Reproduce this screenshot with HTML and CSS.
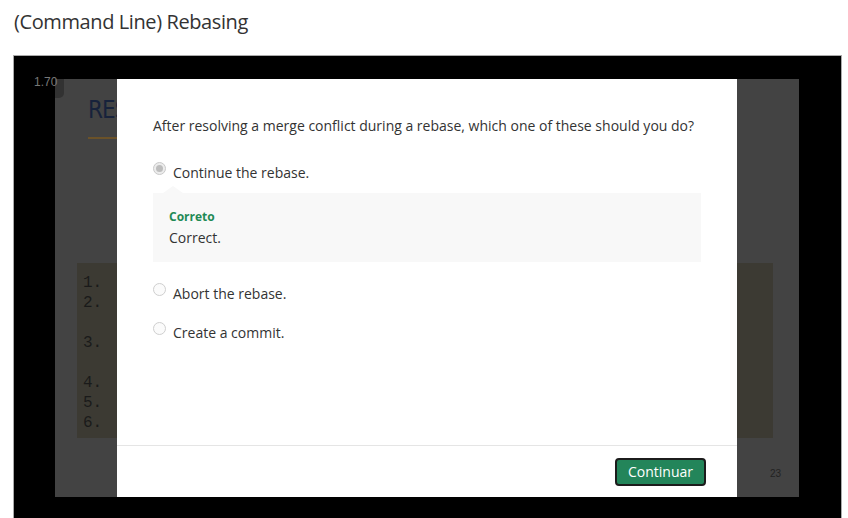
FILE: index.html
```html
<!DOCTYPE html>
<html>
<head>
<meta charset="utf-8">
<link rel="stylesheet" href="styles.css">
</head>
<body>
<h1 class="page-title">(Command Line) Rebasing</h1>
<div class="player">
  <div class="stage">
    <div class="slide">
      <div class="slide-title">RES</div>
      <div class="slide-rule"></div>
      <div class="code">
        <div class="ln">1.</div>
        <div class="ln">2.</div>
        <div class="ln"></div>
        <div class="ln">3.</div>
        <div class="ln"></div>
        <div class="ln">4.</div>
        <div class="ln">5.</div>
        <div class="ln">6.</div>
      </div>
      <div class="slide-foot"><span class="page-no">23</span></div>
    </div>
  </div>
  <div class="speed">1.70</div>
  <div class="modal">
    <div class="modal-body">
      <p class="question">After resolving a merge conflict during a rebase, which one of these should you do?</p>
      <div class="option">
        <span class="radio checked"></span>
        <span class="opt-text">Continue the rebase.</span>
      </div>
      <div class="feedback">
        <div class="fb-title">Correto</div>
        <div class="fb-text">Correct.</div>
      </div>
      <div class="option">
        <span class="radio"></span>
        <span class="opt-text">Abort the rebase.</span>
      </div>
      <div class="option">
        <span class="radio"></span>
        <span class="opt-text">Create a commit.</span>
      </div>
    </div>
    <div class="modal-foot">
      <button class="btn">Continuar</button>
    </div>
  </div>
</div>
</body>
</html>
```

FILE: styles.css
```css
html, body {
  margin: 0;
  padding: 0;
  background: #fff;
  overflow: hidden;
}
body {
  width: 848px;
  height: 518px;
  padding-left: 13px;
  box-sizing: border-box;
  font-family: "Open Sans", "Liberation Sans", sans-serif;
  color: #333;
}
.page-title {
  margin: 8px 0 19px 1px;
  font-size: 20px;
  line-height: 28px;
  font-weight: 400;
  letter-spacing: -0.4px;
  color: #333;
}
.player {
  position: relative;
  width: 829px;
  height: 480px;
  box-sizing: border-box;
  border: 1px solid #aaa;
  border-bottom: none;
  background: #000;
}
.stage {
  padding: 23px 0 0 41px;
}
.slide {
  width: 744px;
  height: 418px;
  background: #434343;
  display: flex;
  flex-direction: column;
  overflow: hidden;
  font-family: "Liberation Sans", Arial, sans-serif;
}
.slide-title {
  margin: 17px 0 0 33px;
  font-family: "Liberation Sans Narrow", "DejaVu Sans Condensed", "Liberation Sans", sans-serif;
  font-size: 24px;
  line-height: 28px;
  letter-spacing: -1px;
  color: #17223b;
  white-space: nowrap;
}
.slide-rule {
  margin: 13px 0 0 33px;
  width: 40px;
  height: 2px;
  background: #6b5229;
}
.code {
  margin: 124px 26px 0 22px;
  padding: 10px 6px 5px;
  background: #3c3a33;
  height: 175px;
  box-sizing: border-box;
}
.ln {
  height: 20px;
  line-height: 21px;
  font-family: "Liberation Mono", "Courier New", monospace;
  font-size: 16px;
  color: #1a1a1a;
}
.slide-foot {
  margin-top: auto;
  display: flex;
  justify-content: flex-end;
  padding: 0 18px 17px 0;
}
.page-no {
  font-size: 10px;
  line-height: 12px;
  color: #222;
}
.speed {
  position: absolute;
  left: 14px;
  top: 12px;
  width: 36px;
  height: 30px;
  box-sizing: border-box;
  padding: 7px 0 0 6px;
  border-radius: 0 0 5px 0;
  background: rgba(0, 0, 0, 0.25);
  font-family: "Liberation Sans", Arial, sans-serif;
  font-size: 12px;
  line-height: 14px;
  color: #777;
}
.modal {
  position: absolute;
  left: 103px;
  top: 23px;
  width: 620px;
  height: 418px;
  background: #fff;
  display: flex;
  flex-direction: column;
}
.modal-body {
  flex: 1;
  padding: 37px 36px 0;
}
.question {
  margin: 0 0 26px;
  font-size: 14px;
  line-height: 20px;
  color: #333;
}
.option {
  display: flex;
  align-items: flex-start;
  gap: 7px;
  font-size: 14px;
  line-height: 20px;
  color: #333;
}
.opt-text {
  padding-top: 1px;
}
.option + .option {
  margin-top: 18px;
}
.radio {
  width: 13px;
  height: 13px;
  box-sizing: border-box;
  border-radius: 50%;
  border: 1px solid #cfcfcf;
  background: #fbfbfb;
  flex: none;
  display: flex;
  align-items: center;
  justify-content: center;
}
.radio.checked {
  background: #ececec;
  border-color: #c9c9c9;
}
.radio.checked::after {
  content: "";
  width: 7px;
  height: 7px;
  border-radius: 50%;
  background: #bdbdbd;
}
.feedback {
  position: relative;
  margin: 10px 0 21px;
  background: #f8f8f8;
  padding: 15px 16px 14px;
}
.feedback::before {
  content: "";
  position: absolute;
  left: 10px;
  top: -7px;
  border-left: 10px solid transparent;
  border-right: 10px solid transparent;
  border-bottom: 7px solid #f8f8f8;
}
.fb-title {
  font-size: 12px;
  line-height: 18px;
  font-weight: 700;
  color: #1f8a55;
  margin-bottom: 2px;
}
.fb-text {
  font-size: 14px;
  line-height: 20px;
  color: #333;
}
.modal-foot {
  border-top: 1px solid #e5e5e5;
  height: 52px;
  box-sizing: border-box;
  padding: 12px 31px 0 0;
  display: flex;
  justify-content: flex-end;
  align-items: flex-start;
}
.btn {
  height: 28px;
  box-sizing: border-box;
  padding: 0 11px;
  border: 2px solid #1c1c1c;
  border-radius: 4px;
  background: #23855a;
  color: #fff;
  font-family: "Open Sans", "Liberation Sans", sans-serif;
  font-size: 14px;
  line-height: 24px;
}
```
